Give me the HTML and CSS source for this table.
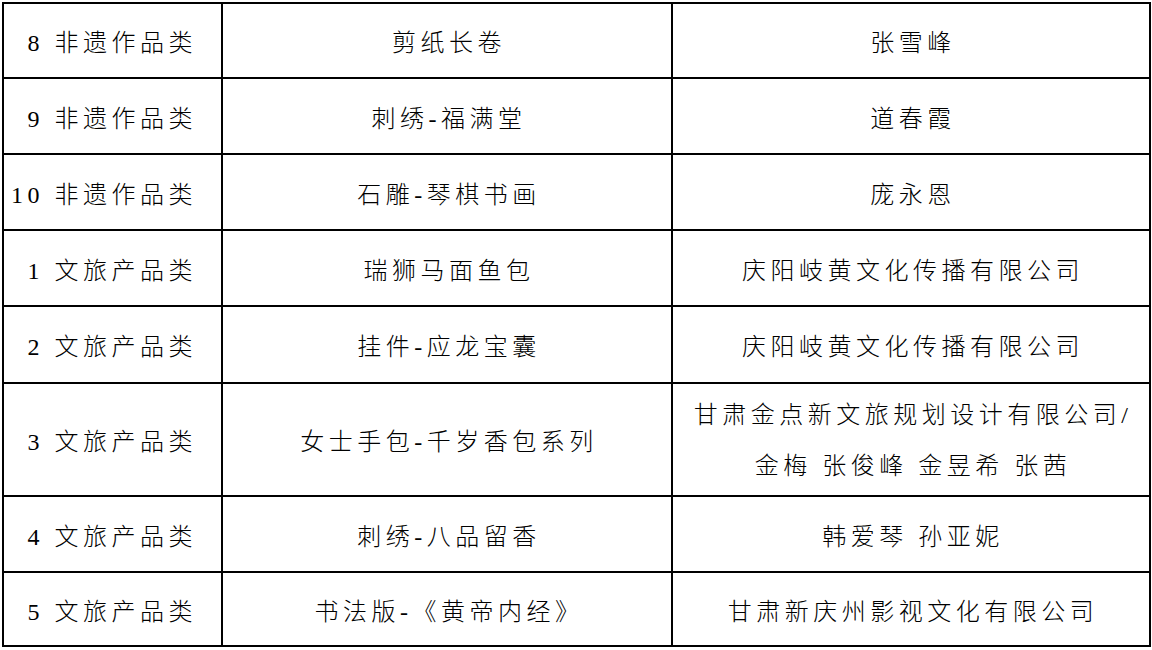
FILE: index.html
```html
<!DOCTYPE html>
<html lang="zh-CN">
<head>
<meta charset="utf-8">
<title>名单</title>
<link rel="stylesheet" href="styles.css">
</head>
<body>
<div class="sheet">
  <div class="cell c1">8 非遗作品类</div>
  <div class="cell c2">剪纸长卷</div>
  <div class="cell c3">张雪峰</div>

  <div class="cell c1">9 非遗作品类</div>
  <div class="cell c2">刺绣-福满堂</div>
  <div class="cell c3">道春霞</div>

  <div class="cell c1">10 非遗作品类</div>
  <div class="cell c2">石雕-琴棋书画</div>
  <div class="cell c3">庞永恩</div>

  <div class="cell c1">1 文旅产品类</div>
  <div class="cell c2">瑞狮马面鱼包</div>
  <div class="cell c3">庆阳岐黄文化传播有限公司</div>

  <div class="cell c1">2 文旅产品类</div>
  <div class="cell c2">挂件-应龙宝囊</div>
  <div class="cell c3">庆阳岐黄文化传播有限公司</div>

  <div class="cell c1">3 文旅产品类</div>
  <div class="cell c2">女士手包-千岁香包系列</div>
  <div class="cell c3 two"><span>甘肃金点新文旅规划设计有限公司/</span><span>金梅 张俊峰 金昱希 张茜</span></div>

  <div class="cell c1">4 文旅产品类</div>
  <div class="cell c2">刺绣-八品留香</div>
  <div class="cell c3">韩爱琴 孙亚妮</div>

  <div class="cell c1">5 文旅产品类</div>
  <div class="cell c2">书法版-《黄帝内经》</div>
  <div class="cell c3">甘肃新庆州影视文化有限公司</div>
</div>
</body>
</html>
```

FILE: styles.css
```css
html, body {
  margin: 0;
  padding: 0;
  background: #ffffff;
}

body {
  font-family: "Liberation Serif", "Noto Sans CJK SC", serif;
  color: #000000;
}

.sheet {
  margin: 2px 0 0 2px;
  width: 1147px;
  display: grid;
  grid-template-columns: 219px 450px 478px;
  grid-template-rows: 75px 76px 76px 76px 77px 113px 76px 74px;
  border-top: 2px solid #000;
  border-left: 2px solid #000;
}

.cell {
  border-right: 2px solid #000;
  border-bottom: 2px solid #000;
  display: flex;
  align-items: center;
  justify-content: center;
  font-size: 24px;
  font-weight: 300;
  letter-spacing: 4.5px;
  white-space: pre;
  box-sizing: border-box;
}

.c1 {
  justify-content: flex-end;
  padding-right: 24px;
}

.c2,
.c3 {
  padding-left: 4px;
}

.two {
  flex-direction: column;
  line-height: 51px;
  padding-top: 2px;
}
```
